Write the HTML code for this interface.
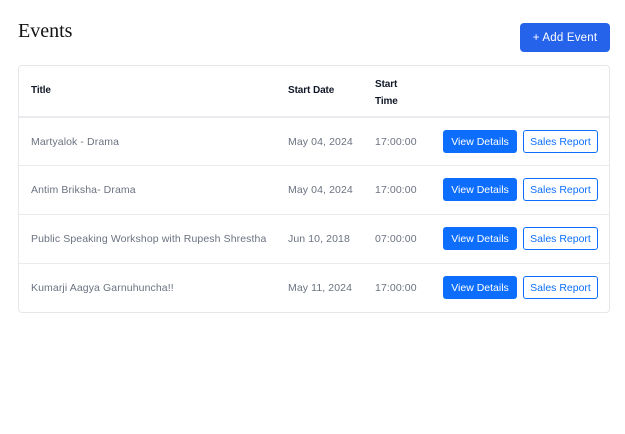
<!DOCTYPE html>
<html><head><style>
body{margin:0;width:625px;height:434px;background:#fff;font-family:"Liberation Sans",sans-serif;position:relative;overflow:hidden}
.a{position:absolute}
h1{position:absolute;left:18px;top:20px;margin:0;font:400 20px "Liberation Serif",serif;color:#111}
.add{left:520px;top:23px;width:90px;height:29px;background:#2563eb;border-radius:4px;color:#fff;font-size:11.5px;line-height:30px;text-align:center;letter-spacing:.2px}
.tbl{left:18px;top:65px;width:590px;height:246px;border:1px solid #e5e7eb;border-radius:4px}
.th{font-size:10px;font-weight:bold;color:#111827;letter-spacing:-.1px}
.td{font-size:10.5px;color:#6b7280;letter-spacing:.1px}
.line{left:19px;width:590px;height:1px;background:#e9ebef}
.vd{left:443px;width:74px;height:23px;background:#0d6efd;border-radius:3px;color:#fff;font-size:10.5px;line-height:24px;text-align:center;letter-spacing:0}
.sr{left:523px;width:73px;height:21px;border:1px solid #0d6efd;border-radius:3px;color:#0d6efd;font-size:10.5px;line-height:22px;text-align:center;letter-spacing:0}
</style></head><body>
<h1>Events</h1>
<div class="a add">+ Add Event</div>
<div class="a tbl"></div>
<div class="a th" style="left:31px;top:85px">Title</div>
<div class="a th" style="left:288px;top:85px">Start Date</div>
<div class="a th" style="left:375px;top:76px;line-height:17px">Start<br>Time</div>
<div class="a line" style="top:116px;height:2px"></div>
<div class="a line" style="top:165px"></div>
<div class="a line" style="top:214px"></div>
<div class="a line" style="top:263px"></div>

<div class="a td" style="left:31px;top:136px">Martyalok - Drama</div>
<div class="a td" style="left:288px;top:136px">May 04, 2024</div>
<div class="a td" style="left:375px;top:136px">17:00:00</div>
<div class="a vd" style="top:130px">View Details</div>
<div class="a sr" style="top:130px">Sales Report</div>

<div class="a td" style="left:31px;top:184px">Antim Briksha- Drama</div>
<div class="a td" style="left:288px;top:184px">May 04, 2024</div>
<div class="a td" style="left:375px;top:184px">17:00:00</div>
<div class="a vd" style="top:178px">View Details</div>
<div class="a sr" style="top:178px">Sales Report</div>

<div class="a td" style="left:31px;top:233px">Public Speaking Workshop with Rupesh Shrestha</div>
<div class="a td" style="left:288px;top:233px">Jun 10, 2018</div>
<div class="a td" style="left:375px;top:233px">07:00:00</div>
<div class="a vd" style="top:227px">View Details</div>
<div class="a sr" style="top:227px">Sales Report</div>

<div class="a td" style="left:31px;top:282px">Kumarji Aagya Garnuhuncha!!</div>
<div class="a td" style="left:288px;top:282px">May 11, 2024</div>
<div class="a td" style="left:375px;top:282px">17:00:00</div>
<div class="a vd" style="top:276px">View Details</div>
<div class="a sr" style="top:276px">Sales Report</div>
</body></html>
